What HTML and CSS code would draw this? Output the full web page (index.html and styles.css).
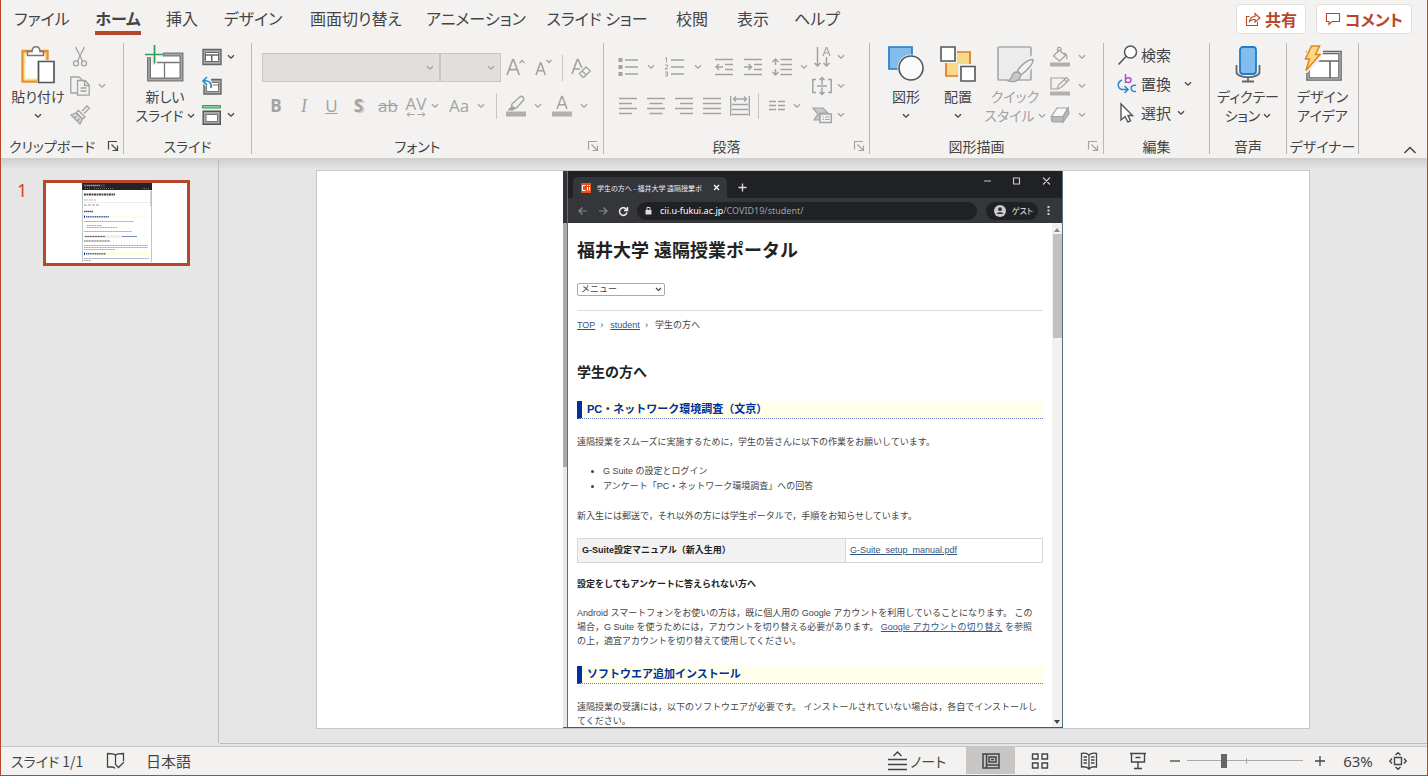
FILE: index.html
```html
<!DOCTYPE html>
<html lang="ja">
<head>
<meta charset="utf-8">
<title>プレゼンテーション</title>
<link rel="stylesheet" href="styles.css">
</head>
<body>
<svg class="defs" aria-hidden="true">
  <symbol id="chev" viewBox="0 0 8 6"><path d="M1 1.2 4 4.2 7 1.2" fill="none" stroke="currentColor" stroke-width="1.3"/></symbol>
  <symbol id="launch" viewBox="0 0 12 12"><path d="M1.5 9.500V1.500H10M4.500 4.500 10 10M10.500 5.500V10.500H5.500" fill="none" stroke="currentColor" stroke-width="1.2"/></symbol>
</svg>
<div class="app">
  <header class="topbar">
    <nav class="tabs" aria-label="リボン タブ">
      <button class="tab">ファイル</button><button class="tab tab-on"><span>ホーム</span></button><button class="tab">挿入</button><button class="tab">デザイン</button><button class="tab">画面切り替え</button><button class="tab">アニメーション</button><button class="tab">スライド ショー</button><button class="tab">校閲</button><button class="tab">表示</button><button class="tab">ヘルプ</button>
    </nav>
    <div class="actions">
      <button class="action"><svg width="16" height="16" viewBox="0 0 16 16" fill="none" stroke="currentColor" stroke-width="1.1"><path d="M4.500 5.500H1.500V14.500H12.500V11M4.500 10.500C5 7 7 5.500 10 5.500V2.500L15 7 10 11V8.500C7.500 8.300 6 8.800 4.500 10.500Z"/></svg>共有</button>
      <button class="action"><svg width="16" height="16" viewBox="0 0 16 16" fill="none" stroke="currentColor" stroke-width="1.1"><path d="M1.500 2.500H14.500V10.500H7L4 13.500V10.500H1.500Z"/></svg>コメント</button>
    </div>
  </header>

  <div class="ribbon">
    <section class="group g-clip">
      <div class="body">
        <button class="big w-paste"><svg width="36" height="40" viewBox="0 0 36 40"><path d="M3 6.500H27V36H3Z" fill="#fff" stroke="#e8912d" stroke-width="3.400"/><path d="M4.500 8.500H25.500V34.500H4.500Z" fill="#fff" stroke="#fbdf9d" stroke-width="1.800"/><path d="M7.500 10.500V6.500H12C12 0 20 0 20 6.500H23.500V10.500Z" fill="#fafafa" stroke="#777" stroke-width="1.500"/><path d="M17 15H36V40H17Z" fill="#f3f2f1"/><path d="M18.500 16.500H34V37.500H18.500Z" fill="#fff" stroke="#555" stroke-width="1.700"/></svg><span>貼り付け</span><svg class="chev"><use href="#chev"/></svg></button>
        <div class="stack off">
          <button class="mini" aria-label="切り取り"><svg width="20" height="20" viewBox="0 0 20 20" fill="none" stroke="currentColor" stroke-width="1.3"><path d="M5.500 0 12.500 14M14.500 0 7.500 14"/><circle cx="6" cy="16.300" r="2.500"/><circle cx="14" cy="16.300" r="2.500"/></svg></button>
          <button class="mini" aria-label="コピー"><svg width="20" height="20" viewBox="0 0 20 20" fill="none" stroke="currentColor" stroke-width="1.3"><path d="M7 17H.8V1H9L13 5"/><path d="M7.500 4.500H15L19.200 9V19.200H7.500ZM14.500 5V9.500H19M10.500 12H16.500M10.500 15H16.500"/></svg><svg class="chev"><use href="#chev"/></svg></button>
          <button class="mini" aria-label="書式のコピー"><svg width="20" height="20" viewBox="0 0 20 20" fill="none" stroke="currentColor" stroke-width="1.3"><path d="M12 6 17 1 19.300 3.300 14 8.500M8.500 5.500 15 12 12.500 14 6.300 7.500Z"/><path d="M6 8 1 10 10 19 12.500 14ZM4 13 6.500 11.500M7 16 9.500 14" fill="#d6d6d6"/></svg></button>
        </div>
      </div>
      <div class="foot"><span>クリップボード</span><button class="launch" aria-label="クリップボードの設定"><svg width="12" height="12"><use href="#launch"/></svg></button></div>
    </section>

    <section class="group g-slide">
      <div class="body">
        <button class="big w-new"><svg width="38" height="38" viewBox="0 0 38 38"><path d="M3 9.500H35.500V34.500H3Z" fill="#fff" stroke="#777" stroke-width="4"/><path d="M3 9.500H35.500V34.500H3Z" fill="none" stroke="#aaa" stroke-width="1.400"/><path d="M5 17.500H33.500M18.500 17.500V33" stroke="#777" stroke-width="1.300"/><path d="M0 7H17V12H11V20H5V12H0Z" fill="#f3f2f1"/><path d="M8.500 0V18.500M-1 9.500H18" stroke="#2f9e58" stroke-width="1.700"/></svg><span>新しい<br>スライド <svg class="chev"><use href="#chev"/></svg></span></button>
        <div class="stack">
          <button class="mini" aria-label="レイアウト"><svg width="20" height="20" viewBox="0 0 20 20" fill="#fff" stroke="#666"><path d="M1 2.500H19V17.500H1Z" fill="#aaa" stroke-width="1.400"/><path d="M3.500 5.500H16.500V8H3.500ZM3.500 8H9.500V14.500H3.500ZM10 8H16.500V14.500H10Z"/></svg><svg class="chev"><use href="#chev"/></svg></button>
          <button class="mini" aria-label="リセット"><svg width="20" height="20" viewBox="0 0 20 20" fill="none"><path d="M2 3.500H19V18H2Z" fill="#aaa" stroke="#666" stroke-width="1.400"/><path d="M4.500 6.500H16.500V15.500H4.500ZM10 9H16.500" fill="#fff" stroke="#777"/><path d="M0 0H9V8H0Z" fill="#f3f2f1"/><path d="M5 1 1 5 5 9M1 5C7 4 10 7 9 12" stroke="#f3f2f1" stroke-width="3.500"/><path d="M5 1 1 5 5 9M1 5C7 4 10 7 9 12" stroke="#1e8bcd" stroke-width="1.600"/></svg></button>
          <button class="mini" aria-label="セクション"><svg width="20" height="20" viewBox="0 0 20 20"><path d="M.5.5H18.500V3H.5Z" fill="#8ed0a0" stroke="#2f9e58"/><path d="M1.200 6.200H18.300V19.300H1.200Z" fill="#aaa" stroke="#555" stroke-width="1.400"/><path d="M4 9.500H15.500V16.500H4Z" fill="#fff" stroke="#777"/></svg><svg class="chev"><use href="#chev"/></svg></button>
        </div>
      </div>
      <div class="foot"><span>スライド</span></div>
    </section>

    <section class="group g-font off">
      <div class="rows">
        <div class="row font1">
          <label class="combo"><select disabled aria-label="フォント"></select><svg class="chev"><use href="#chev"/></svg></label>
          <label class="combo"><select disabled aria-label="フォント サイズ"></select><svg class="chev"><use href="#chev"/></svg></label>
          <button class="tool" aria-label="拡大"><svg width="20" height="20" viewBox="0 0 20 20" fill="none" stroke="currentColor"><path d="M1 17 6.800 1.500H7.500L13.300 17M3 11.700H11.300" stroke-width="1.700"/><path d="M13.500 5 16 2.500 18.500 5" stroke-width="1.300"/></svg></button>
          <button class="tool" aria-label="縮小"><svg width="20" height="20" viewBox="0 0 20 20" fill="none" stroke="currentColor"><path d="M2 17 6.300 5H7L11.300 17M3.700 12.700H9.600" stroke-width="1.600"/><path d="M12.500 2 15 4.500 17.500 2" stroke-width="1.300"/></svg></button>
          <i class="sep"></i>
          <button class="tool" aria-label="書式のクリア"><svg width="20" height="20" viewBox="0 0 20 20" fill="none" stroke="currentColor"><path d="M1 16 6.300 1.500H7L11 10M3 11H9" stroke-width="1.600"/><path d="M8.500 15.500 15 9 19.300 13 13 19H11.500ZM11 13 15.500 17" stroke-width="1.300"/></svg></button>
        </div>
        <div class="row font2">
          <button class="tool glyph"><b>B</b></button>
          <button class="tool glyph"><i class="ital">I</i></button>
          <button class="tool glyph"><u>U</u></button>
          <button class="tool glyph shade"><b>S</b></button>
          <button class="tool glyph"><s>ab</s></button>
          <button class="tool glyph spacing"><span>AV</span><svg width="20" height="5" viewBox="0 0 20 5" fill="none" stroke="currentColor"><path d="M3.500.5 1 2.500 3.500 4.500M1 2.500H8.500M16.500.5 19 2.500 16.500 4.500M19 2.500H11.500"/></svg></button>
          <svg class="chev"><use href="#chev"/></svg>
          <button class="tool glyph">Aa</button>
          <svg class="chev"><use href="#chev"/></svg>
          <i class="sep"></i>
          <button class="tool" aria-label="蛍光ペン"><svg width="20" height="22" viewBox="0 0 20 22" fill="none" stroke="currentColor"><path d="M6 9 14 1.700C16 .5 19 3 17.500 5L10.500 13H7.500L5.500 11Z" stroke-width="1.400"/><path d="M6 11.500 2 15H7.500L9 13Z" fill="currentColor"/><path d="M0 19H20" stroke="#b2afad" stroke-width="5"/></svg></button>
          <svg class="chev"><use href="#chev"/></svg>
          <button class="tool" aria-label="フォントの色"><svg width="20" height="22" viewBox="0 0 20 22" fill="none" stroke="currentColor"><path d="M5 14 9.700 1.500H10.300L15 14M6.700 9.700H13.300" stroke-width="1.500"/><path d="M0 19H20" stroke="#b2afad" stroke-width="5"/></svg></button>
          <svg class="chev"><use href="#chev"/></svg>
        </div>
      </div>
      <div class="foot"><span>フォント</span><button class="launch" aria-label="フォントの設定"><svg width="12" height="12"><use href="#launch"/></svg></button></div>
    </section>

    <section class="group g-para off">
      <div class="body">
        <div class="rows">
          <div class="row para1">
            <button class="tool" aria-label="箇条書き"><svg width="20" height="20" viewBox="0 0 20 20" stroke="currentColor" stroke-width="1.600"><path d="M7 3H20M7 10H20M7 17H20"/><path d="M.5 3H4.500M.5 10H4.500M.5 17H4.500" stroke-width="4"/></svg></button>
            <svg class="chev"><use href="#chev"/></svg>
            <button class="tool" aria-label="段落番号"><svg width="20" height="20" viewBox="0 0 20 20" fill="none" stroke="currentColor" stroke-width="1.600"><path d="M7 3H20M7 10H20M7 17H20"/><path d="M1 1.500 2.500.500V5.500M1 8H3.500V10L1 12H4M1 15H3.500V19H1M1.500 17H3.500" stroke-width="1"/></svg></button>
            <svg class="chev"><use href="#chev"/></svg>
            <button class="tool" aria-label="インデントを減らす"><svg width="18" height="20" viewBox="0 0 18 20" fill="none" stroke="currentColor" stroke-width="1.500"><path d="M0 2.500H18M10 7.500H18M10 12.500H18M0 17.500H18M1 10H8M4 7 1 10 4 13"/></svg></button>
            <button class="tool" aria-label="インデントを増やす"><svg width="18" height="20" viewBox="0 0 18 20" fill="none" stroke="currentColor" stroke-width="1.500"><path d="M0 2.500H18M10 7.500H18M10 12.500H18M0 17.500H18M0 10H7M4.500 7 7.500 10 4.500 13"/></svg></button>
            <button class="tool" aria-label="行間"><svg width="20" height="20" viewBox="0 0 20 20" fill="none" stroke="currentColor" stroke-width="1.500"><path d="M8.500 2.500H20M8.500 7.500H20M8.500 12.500H20M8.500 17.500H20M3.500 2V8M.5 5 3.500 2 6.500 5M3.500 12V18M.5 15 3.500 18 6.500 15"/></svg></button>
            <svg class="chev"><use href="#chev"/></svg>
          </div>
          <div class="row para2">
            <button class="tool" aria-label="左揃え"><svg width="18" height="20" viewBox="0 0 18 20" stroke="currentColor" stroke-width="1.500"><path d="M0 2.500H18M0 7.500H13M0 12.500H18M0 17.500H13"/></svg></button>
            <button class="tool" aria-label="中央揃え"><svg width="18" height="20" viewBox="0 0 18 20" stroke="currentColor" stroke-width="1.500"><path d="M0 2.500H18M2.500 7.500H15.500M0 12.500H18M2.500 17.500H15.500"/></svg></button>
            <button class="tool" aria-label="右揃え"><svg width="18" height="20" viewBox="0 0 18 20" stroke="currentColor" stroke-width="1.500"><path d="M0 2.500H18M5 7.500H18M0 12.500H18M5 17.500H18"/></svg></button>
            <button class="tool" aria-label="両端揃え"><svg width="18" height="20" viewBox="0 0 18 20" stroke="currentColor" stroke-width="1.500"><path d="M0 2.500H18M0 7.500H18M0 12.500H18M0 17.500H18"/></svg></button>
            <button class="tool" aria-label="均等割り付け"><svg width="20" height="22" viewBox="0 0 20 22" fill="none" stroke="currentColor" stroke-width="1.300"><path d="M.7 1V21M19.300 1V21M2 9.500H18M2 14.500H18M2 19.500H18M3.500 4H16.500M6 1.500 3.500 4 6 6.500M14 1.500 16.500 4 14 6.500"/></svg></button>
            <i class="sep"></i>
            <button class="tool" aria-label="段組み"><svg width="16" height="12" viewBox="0 0 16 12" stroke="currentColor" stroke-width="1.400"><path d="M0 1.500H7M9 1.500H16M0 5.500H7M9 5.500H16M0 9.500H7M9 9.500H16"/></svg></button>
            <svg class="chev"><use href="#chev"/></svg>
          </div>
        </div>
        <div class="stack">
          <button class="mini" aria-label="文字列の方向"><svg width="20" height="22" viewBox="0 0 20 22" fill="none" stroke="currentColor" stroke-width="1.500"><path d="M5.500 1V20M2.500 17 5.500 20 8.500 17M14.500 11V20M11.500 17 14.500 20 17.500 17"/><path d="M11 10 14.200 1.500H14.800L18 10M12 7H17" stroke-width="1.100"/></svg><svg class="chev"><use href="#chev"/></svg></button>
          <button class="mini" aria-label="文字の配置"><svg width="20" height="20" viewBox="0 0 20 20" fill="none" stroke="currentColor" stroke-width="1.500"><path d="M4 3.500H.8V16.500H4M16 3.500H19.200V16.500H16M5 10H15M10 1.500V8.500M7.500 4 10 1.500 12.500 4M10 11.500V18.500M7.500 16 10 18.500 12.500 16" /></svg><svg class="chev"><use href="#chev"/></svg></button>
          <button class="mini" aria-label="SmartArt に変換"><svg width="20" height="18" viewBox="0 0 20 18" stroke="currentColor" stroke-width="1.200"><path d="M1 2H11L16 7H8V14H2L6 8Z" fill="#c9c9c9"/><path d="M8 8H19.300V16.500H8Z" fill="#f3f2f1" stroke-width="1.500"/><path d="M10.500 11H12M13 11H17.500M10.500 13.500H12M13 13.500H17.500"/></svg><svg class="chev"><use href="#chev"/></svg></button>
        </div>
      </div>
      <div class="foot"><span>段落</span><button class="launch" aria-label="段落の設定"><svg width="12" height="12"><use href="#launch"/></svg></button></div>
    </section>

    <section class="group g-draw">
      <div class="body">
        <button class="big w-shape"><svg width="36" height="38" viewBox="0 0 36 38"><path d="M1 2H24V24H1Z" fill="#83bdee" stroke="#1f7dc9" stroke-width="1.700"/><circle cx="23" cy="23" r="13.500" fill="#f3f2f1"/><circle cx="23" cy="23" r="12" fill="#fafafa" stroke="#555" stroke-width="1.600"/></svg><span>図形</span><svg class="chev"><use href="#chev"/></svg></button>
        <button class="big w-shape"><svg width="36" height="38" viewBox="0 0 36 38"><path d="M6 7H30V31H6Z" fill="#f8d98a" stroke="#e07a1b" stroke-width="1.700"/><path d="M0 0H17V18H0ZM18 19H36V38H18Z" fill="#f3f2f1"/><path d="M1 2H15V16H1ZM21 21.500H35V36H21Z" fill="#fff" stroke="#555" stroke-width="1.600"/></svg><span>配置</span><svg class="chev"><use href="#chev"/></svg></button>
        <button class="big w-quick off"><svg width="38" height="38" viewBox="0 0 38 38" stroke="currentColor"><rect x="2" y="2" width="33" height="33" rx="1" fill="#ececec" stroke="#ababab" stroke-width="1.700"/><path d="M11 36 22 24 36 10 38 20 30 32Z" fill="#f3f2f1" stroke="none"/><path d="M21.500 26C24 20 33 14 37 14.500C38 18 31 26 25 30Z" fill="#f1f1f1" stroke-width="1.400"/><path d="M12 36C17 35 14 28 20 27C25 27 26 31 23 34C20 37 15 37 12 36Z" fill="#c8c8c8" stroke-width="1.300"/></svg><span>クイック<br>スタイル <svg class="chev"><use href="#chev"/></svg></span></button>
        <div class="stack off">
          <button class="mini" aria-label="図形の塗りつぶし"><svg width="20" height="20" viewBox="0 0 20 20" fill="none" stroke="currentColor" stroke-width="1.200"><path d="M9 3 15.500 8.500 9.500 14 3.500 9ZM11 5V1.500C10 0 7.500 0 7.500 2V6M14 6C17 7 17.500 9 16.500 12"/><path d="M0 17.500H20" stroke="#b2afad" stroke-width="4"/></svg><svg class="chev"><use href="#chev"/></svg></button>
          <button class="mini" aria-label="図形の枠線"><svg width="20" height="20" viewBox="0 0 20 20" fill="none" stroke="currentColor" stroke-width="1.200"><path d="M15 2H1V13H6M7 13 8.500 9 16.500 1.500 19 4 11 11.500ZM14.500 3.500 17 6"/><path d="M0 17.500H20" stroke="#b2afad" stroke-width="4"/></svg><svg class="chev"><use href="#chev"/></svg></button>
          <button class="mini" aria-label="図形の効果"><svg width="20" height="20" viewBox="0 0 20 20" stroke="currentColor" stroke-width="1.200"><path d="M7 3H18L13 11.500H1.500Z" fill="#f8f8f8"/><path d="M1.500 11.500H13V17H3Q1 17 1.500 11.500ZM18 3 19 8.500 13 17V11.500Z" fill="#b9b9b9"/></svg><svg class="chev"><use href="#chev"/></svg></button>
        </div>
      </div>
      <div class="foot"><span>図形描画</span><button class="launch off" aria-label="図形描画の設定"><svg width="12" height="12"><use href="#launch"/></svg></button></div>
    </section>

    <section class="group g-edit">
      <div class="body">
        <div class="stack">
          <button class="mini text"><svg width="20" height="20" viewBox="0 0 20 20" fill="#fff" stroke="#555" stroke-width="1.500"><circle cx="12.500" cy="7" r="6"/><path d="M8 11.500.5 19.500"/></svg>検索</button>
          <button class="mini text far"><svg width="20" height="20" viewBox="0 0 20 20" fill="none" stroke-width="1.500"><path d="M7.500 0V9M7.500 5.500C8.500 3 13 3 13 6S8.500 9.500 7.500 7" stroke="#b14fc0"/><path d="M4 6C-1 8-1 14 4 15.500H9M6.500 12 10 15.500 6.500 19M18 11.500C12 9.500 11 18.500 18 17.500" stroke="#2389cf"/></svg>置換<svg class="chev"><use href="#chev"/></svg></button>
          <button class="mini text"><svg width="20" height="20" viewBox="0 0 20 20" fill="#fff" stroke="#555" stroke-width="1.400"><path d="M3 1V17L7 13.500 10 19 12.500 17.700 10 12.500H14.500Z"/></svg>選択<svg class="chev"><use href="#chev"/></svg></button>
        </div>
      </div>
      <div class="foot"><span>編集</span></div>
    </section>

    <section class="group g-voice">
      <div class="body">
        <button class="big w-full"><svg width="26" height="38" viewBox="0 0 26 38"><path d="M1.500 20V27C1.500 34 24.500 34 24.500 27V20M13 32V36M7 36.500H19" fill="none" stroke="#666" stroke-width="1.800"/><rect x="5" y="2" width="16" height="27" rx="3" fill="#83bdee" stroke="#1f7dc9" stroke-width="1.800"/></svg><span>ディクテー<br>ション <svg class="chev"><use href="#chev"/></svg></span></button>
      </div>
      <div class="foot"><span>音声</span></div>
    </section>

    <section class="group g-design">
      <div class="body">
        <button class="big w-full"><svg width="38" height="38" viewBox="0 0 38 38"><path d="M4 7.500H36V34H4Z" fill="#fff" stroke="#666" stroke-width="3.600"/><path d="M4 7.500H36V34H4Z" fill="none" stroke="#ccc" stroke-width="1"/><path d="M5 16H35M26 16V33" stroke="#666" stroke-width="1.600"/><path d="M5 0H19V8L18 13 3 28 0 28V14Z" fill="#f3f2f1"/><path d="M7.500 1H15.500L11.500 9.500H16L2 25.500 5.500 14H1.500Z" fill="#fbd98a" stroke="#e8861c" stroke-width="1.600"/></svg><span>デザイン<br>アイデア</span></button>
      </div>
      <div class="foot"><span>デザイナー</span></div>
    </section>
    <button class="collapse" aria-label="リボンを折りたたむ"><svg width="14" height="8" viewBox="0 0 14 8" fill="none" stroke="currentColor" stroke-width="1.500"><path d="M1.500 7 7 1.500 12.500 7"/></svg></button>
  </div>

  <main class="work">
    <aside class="thumbs">
      <span class="num">1</span>
      <button class="thumb" aria-label="スライド 1">
        <svg class="thumb-pic" viewBox="0 0 70 79" preserveAspectRatio="none">
          <path d="M0 0H70V79H0Z" fill="#fff"/><path d="M.5 0V79M69.500 0V79" stroke="#8aa0ad" stroke-width=".6"/><path d="M0 0H70V7H0Z" fill="#222428"/><path d="M1.500 1H23V4H1.500Z" fill="#393b3f"/><path d="M2.300 2.500H4" stroke="#e8501e" stroke-width="1.400"/><path d="M5 2.500H18" stroke="#aaa" stroke-dasharray="1.400 .5"/><path d="M3 5.500H9M12 5.500H32M60 5.500H67" stroke="#888" stroke-dasharray="1 1" stroke-width=".8"/>
          <path d="M2 11.500H33" stroke="#444" stroke-width="2.200" stroke-dasharray="2 .5"/>
          <path d="M2 17H14" stroke="#bbb" stroke-width="1" stroke-dasharray="4 1"/><path d="M1 19.500H68" stroke="#ddd" stroke-width=".5"/>
          <path d="M2 22H18" stroke="#999" stroke-dasharray="3 1"/><path d="M2 28.500H11" stroke="#555" stroke-width="1.500" stroke-dasharray="1.500 .4"/>
          <path d="M2 32.500H67V35H2ZM2 69.500H67V72H2Z" fill="#ffffdc"/><path d="M2 32.500H3V35H2ZM2 69.500H3V72H2Z" fill="#0030a0"/>
          <path d="M4 33.700H27M4 70.700H24" stroke="#4865ae" stroke-width="1.400" stroke-dasharray="1.300 .5"/>
          <path d="M2 38.500H52M5 42.500H20M5 44.500H35M2 48.500H50M2 62.500H66M2 64.500H66M2 66.500H33M2 75.500H67M2 77.500H9" stroke="#999" stroke-width=".9" stroke-dasharray="1.200 .4"/>
          <path d="M2 52H40V55H2Z" fill="#eee"/><path d="M3 53.500H23M2 58H28" stroke="#555" stroke-width="1.100" stroke-dasharray="1.200 .4"/><path d="M40 53.500H55" stroke="#7b8ead"/>
          <path d="M69 8V23" stroke="#bbb" stroke-width="1.300"/>
        </svg>
      </button>
    </aside>
    <div class="stage">
      <article class="slide">
        <div class="shot">
          <div class="behind"></div>
          <div class="browser">
            <div class="titlebar">
              <div class="btab"><svg width="10" height="10" viewBox="0 0 10 10"><path d="M0 0H10V10H0Z" fill="#e8501e"/><path d="M4.500 2.500H1.500V7.500H4.500M6.500 4V7.500M8.500 4V7.500M6.500 2V3M8.500 2V3" fill="none" stroke="#fff"/></svg><span class="btitle">学生の方へ - 福井大学 遠隔授業ポ</span><svg width="7" height="7" viewBox="0 0 7 7" stroke="#fff" stroke-width="1.300"><path d="M1 1 6 6M6 1 1 6"/></svg></div>
              <svg class="plus" width="9" height="9" viewBox="0 0 9 9" stroke="#ddd" stroke-width="1.300"><path d="M4.500.5V8.500M.5 4.500H8.500"/></svg>
              <svg class="wins" width="68" height="10" viewBox="0 0 68 10" fill="none" stroke="#ccc" stroke-width="1.100"><path d="M1 5H8M30.500 2H36.500V8H30.500ZM60 1.500 67 8.500M67 1.500 60 8.500"/></svg>
            </div>
            <div class="addr">
              <svg class="nav" width="50" height="10" viewBox="0 0 50 10" fill="none" stroke="#85888c" stroke-width="1.200"><path d="M9 5H1M4.500 1.500 1 5 4.500 8.500M21 5H29M25.500 1.500 29 5 25.500 8.500"/><path d="M48.500 3.500A3.800 3.800 0 1 0 49 6.500M49.500 1V4.500H46" stroke="#eee" stroke-width="1.500"/></svg>
              <div class="url"><svg width="7" height="9" viewBox="0 0 7 9"><path d="M.5 4H6.500V8.500H.5Z" fill="#ddd"/><path d="M2 4V1.500H5V4" fill="none" stroke="#ddd"/></svg><span><b>cii.u-fukui.ac.jp</b>/COVID19/student/</span></div>
              <div class="guest"><svg width="12" height="12" viewBox="0 0 12 12"><circle cx="6" cy="6" r="6" fill="#ccc"/><circle cx="6" cy="4.200" r="1.900" fill="#333"/><path d="M2.500 9C3.500 6.500 8.500 6.500 9.500 9Z" fill="#333"/></svg>ゲスト</div>
              <svg width="3" height="9" viewBox="0 0 3 9" fill="#ccc"><path d="M.5 0H2.500V2H.5ZM.5 3.500H2.500V5.500H.5ZM.5 7H2.500V9H.5Z"/></svg>
            </div>
            <div class="view">
              <div class="page">
                <h1>福井大学 遠隔授業ポータル</h1>
                <label class="menu"><select aria-label="メニュー"><option>メニュー</option></select><svg width="7" height="5"><use href="#chev"/></svg></label>
                <nav class="crumbs"><a href="#">TOP</a><span>›</span><a href="#">student</a><span>›</span><em>学生の方へ</em></nav>
                <h2>学生の方へ</h2>
                <h3>PC・ネットワーク環境調査（文京）</h3>
                <p>遠隔授業をスムーズに実施するために，学生の皆さんに以下の作業をお願いしています。</p>
                <ul><li>G Suite の設定とログイン</li><li>アンケート「PC・ネットワーク環境調査」への回答</li></ul>
                <p>新入生には郵送で，それ以外の方には学生ポータルで，手順をお知らせしています。</p>
                <table><tr><th>G-Suite設定マニュアル（新入生用）</th><td><a href="#">G-Suite_setup_manual.pdf</a></td></tr></table>
                <h4>設定をしてもアンケートに答えられない方へ</h4>
                <p>Android スマートフォンをお使いの方は，既に個人用の Google アカウントを利用していることになります。 この<br>場合，G Suite を使うためには，アカウントを切り替える必要があります。 <a href="#">Google アカウントの切り替え</a> を参照<br>の上，適宜アカウントを切り替えて使用してください。</p>
                <h3>ソフトウエア追加インストール</h3>
                <p class="last">遠隔授業の受講には，以下のソフトウエアが必要です。 インストールされていない場合は，各自でインストールし<br>てください。</p>
              </div>
              <div class="bar"><svg width="6" height="4"><path d="M0 4 3 0 6 4Z" fill="#888"/></svg><i></i><svg width="6" height="4"><path d="M0 0 3 4 6 0Z" fill="#444"/></svg></div>
            </div>
          </div>
        </div>
      </article>
    </div>
  </main>

  <footer class="status">
    <span class="count">スライド 1/1</span>
    <svg class="book" width="20" height="18" viewBox="0 0 20 18" fill="none" stroke="currentColor" stroke-width="1.300"><path d="M9.500 3C7.500 1.500 4 1.500 1.500 1.500V15H6C7.500 15 8.500 15.500 9 16.500M9.500 3C11.500 1.500 15 1.500 17.500 1.500V9M9.500 3V13M10 13 12.500 15.500 18 10"/></svg>
    <span class="lang">日本語</span>
    <button class="note"><svg width="20" height="20" viewBox="0 0 20 20" fill="none" stroke="currentColor" stroke-width="1.500"><path d="M0 8.500H19M0 13.500H19M0 18.500H19M5.500 5 9.500 1 13.500 5"/></svg>ノート</button>
    <button class="vbtn vbtn-on" aria-label="標準"><svg width="18" height="16" viewBox="0 0 18 16" fill="none" stroke="currentColor" stroke-width="1.500"><path d="M1 1H17V15H1ZM4.500 1V15M7 4H14V9H7ZM9 6.500H12M4.500 12H17"/></svg></button>
    <button class="vbtn" aria-label="スライド一覧"><svg width="18" height="16" viewBox="0 0 18 16" fill="none" stroke="currentColor" stroke-width="1.400"><path d="M1.500 1H7V6H1.500ZM11 1H16.500V6H11ZM1.500 10H7V15H1.500ZM11 10H16.500V15H11Z"/></svg></button>
    <button class="vbtn" aria-label="閲覧表示"><svg width="18" height="18" viewBox="0 0 18 18" fill="none" stroke="currentColor" stroke-width="1.300"><path d="M9 3C7 1 4 1 1.500 1.500V15C4 14.500 7 14.500 9 17C11 14.500 14 14.500 16.500 15V1.500C14 1 11 1 9 3ZM9 3V17M3.500 5H7M3.500 8H7M3.500 11H7M11 5H14.500M11 8H14.500M11 11H14.500"/></svg></button>
    <button class="vbtn" aria-label="スライド ショー"><svg width="18" height="18" viewBox="0 0 18 18" fill="none" stroke="currentColor" stroke-width="1.400"><path d="M1 1.500H17M2.500 1.500V10H15.500V1.500M6.500 5.500H11.500M9 10V16M5 16.500H13"/></svg></button>
    <button class="zbtn" aria-label="縮小"><svg width="10" height="10" viewBox="0 0 10 10" stroke="currentColor" stroke-width="1.300"><path d="M0 5H10"/></svg></button>
    <label class="zoom"><input type="range" min="0" max="100" value="31" aria-label="ズーム"><i></i></label>
    <button class="zbtn" aria-label="拡大"><svg width="10" height="10" viewBox="0 0 10 10" stroke="currentColor" stroke-width="1.300"><path d="M0 5H10M5 0V10"/></svg></button>
    <button class="pct">63%</button>
    <button class="zbtn" aria-label="ウィンドウに合わせる"><svg width="18" height="18" viewBox="0 0 18 18" fill="none" stroke="currentColor" stroke-width="1.400"><path d="M5.500 5.500H12.500V12.500H5.500ZM6.500 3 9 .8 11.500 3M6.500 15 9 17.200 11.500 15M3 6.500 .8 9 3 11.500M15 6.500 17.200 9 15 11.500"/></svg></button>
  </footer>
</div>
</body>
</html>
```
FILE: styles.css
```css
* { box-sizing: border-box; }
body { margin: 0; font-family: "Noto Sans CJK JP", sans-serif; font-size: 14px; color: #444; font-feature-settings: "palt"; }
button { font: inherit; font-feature-settings: inherit; color: inherit; background: none; border: 0; padding: 0; margin: 0; }
select { font: inherit; color: inherit; appearance: none; }
svg { display: block; flex: none; overflow: visible; }
.defs { position: absolute; width: 0; height: 0; }
.app { min-height: 100vh; display: flex; flex-direction: column; background: #f3f2f1; border: 1px solid #b7472a; border-top: 0; }
.chev { width: 8px; height: 6px; }
.off { color: #a3a2a1; }

/* tabs */
.topbar { display: flex; justify-content: space-between; height: 38px; flex: none; }
.tabs { display: grid; grid-template-columns: 82px 70px 58px 84px 122px 118px 124px 66px 56px 72px; }
.tab { font-size: 16px; line-height: 36px; white-space: nowrap; display: flex; justify-content: center; }
.tab-on { font-weight: 700; }
.tab-on span { border-bottom: 4px solid #b7472a; height: 35px; }
.actions { display: flex; gap: 10px; padding: 4px 15px 4px 0; }
.action { display: flex; align-items: center; gap: 4px; padding: 0 8px; background: #fff; border: 1px solid #e1dfdd; border-radius: 3px; color: #b7472a; font-weight: 700; font-size: 16px; }

/* ribbon */
.ribbon { display: flex; height: 122px; padding-top: 5px; border-bottom: 2px solid #d0cfce; flex: none; }
.group { height: 111px; display: flex; flex-direction: column; justify-content: space-between; border-right: 1px solid #b9b8b7; }
.g-clip { width: 123px; }
.g-slide { width: 128px; }
.g-font { width: 352px; }
.g-para { width: 266px; }
.g-draw { width: 234px; }
.g-edit { width: 106px; }
.g-voice { width: 77px; }
.g-design { width: 72px; }
.body { display: flex; }
.foot { display: flex; height: 16px; line-height: 16px; color: #444; }
.foot span { flex: 1; text-align: center; white-space: nowrap; }
.launch { width: 20px; display: flex; align-items: center; justify-content: center; }
.off .launch { color: #a3a2a1; }
.big { display: flex; flex-direction: column; align-items: center; line-height: 19px; white-space: nowrap; }
.big > svg:first-child { margin: 2px 0 4px; }
.big > .chev { margin-top: 7px; }
.big span .chev { display: inline-block; vertical-align: 2px; }
.w-paste { width: 56px; margin-left: 9px; }
.w-paste > svg:first-child { margin: 2px 0; }
.w-new { width: 62px; margin: 0 2px 0 10px; }
.w-shape { width: 52px; }
.g-draw .body { padding-left: 10px; }
.w-quick { width: 62px; }
.w-full { width: 100%; }
.stack { display: flex; flex-direction: column; margin-top: -1px; }
.mini { height: 29px; display: flex; align-items: center; gap: 8px; padding-left: 4px; }
.g-para .mini, .g-slide .mini { gap: 5px; }
.g-edit .body { padding-left: 10px; }
.g-edit .stack { margin-top: -3px; }
.text { font-size: 15px; gap: 3px; white-space: nowrap; }
.text .chev { margin-left: 3px; }
.far .chev { margin-left: 10px; }
.collapse { margin: 103px 10px auto auto; }

.row { display: grid; align-items: center; justify-items: center; }
.rows { padding: 8px 0 0 10px; }
.font1 { grid-template-columns: 178px 61px 29px 28px 8px 30px; height: 33px; }
.font2 { grid-template-columns: 28px 28px 27px 27px 32px 24px 14px 34px 10px 20px 20px 24px 24px 20px; height: 44px; }
.combo { position: relative; width: 100%; }
.combo select { display: block; width: 100%; height: 29px; background: #e1dfdd; border: 1px solid #c8c6c4; border-radius: 0; opacity: 1; }
.combo .chev { position: absolute; right: 6px; top: 12px; }
.tool { display: flex; align-items: center; justify-content: center; }
.glyph { font-family: "Open Sans", sans-serif; font-size: 17px; line-height: 20px; }
.ital { font-family: "Liberation Serif", serif; font-size: 18px; }
.shade { text-shadow: 2px 1px 1px #ccc; }
.spacing { flex-direction: column; line-height: 16px; }
.sep { width: 1px; height: 26px; background: #c8c6c4; }
.para1 { grid-template-columns: 28px 17px 30px 17px 36px 22px 36px 8px; height: 31px; }
.para2 { grid-template-columns: 28px 28px 28px 28px 27px 10px 27px 14px; height: 48px; }

/* workspace */
.work { flex: 1; display: grid; grid-template-columns: 218px 1fr; background: linear-gradient(#d2d2d2, #e6e6e6 10px); }
.thumbs { display: flex; align-items: flex-start; gap: 16px; padding: 20px 0 0 16px; border-right: 1px solid #bdbdbd; margin-bottom: 3px; }
.num { font-family: "Noto Sans", sans-serif; font-size: 18px; line-height: 20px; color: #d24726; width: 10px; }
.thumb { width: 147px; height: 86px; border: 3px solid #b7472a; background: #fff; display: flex; justify-content: center; }
.thumb-pic { width: 70px; height: 79px; }
.stage { display: flex; margin-left: 1px; padding: 10px 117px 14px 96px; border-bottom: 1px solid #bdbdbd; margin-bottom: 2px; }
.slide { flex: 1; display: flex; justify-content: center; background: #fff; border: 1px solid #c6c6c6; }
.shot { width: 500px; display: flex; border-bottom: 1px solid #555; }
.behind { width: 4px; background: linear-gradient(#333 52px, #aaa 52px 296px, #e8e8e8 296px); }
.browser { flex: 1; border: 1px solid #4f7285; border-width: 0 1px; display: flex; flex-direction: column; color: #eee; font-size: 8px; background: #35363a; }
.titlebar { height: 27px; background: #202124; display: flex; align-items: center; }
.btab { align-self: flex-end; height: 21px; width: 154px; margin-left: 5px; padding: 0 7px 0 8px; display: flex; align-items: center; gap: 6px; background: #35363a; border-radius: 5px 5px 0 0; }
.btitle { flex: 1; font-size: 7px; white-space: nowrap; }
.plus { margin: 6px 0 0 11px; }
.wins { margin: 0 11px 8px auto; }
.addr { height: 25px; display: flex; align-items: center; gap: 9px; padding: 0 12px 0 10px; }
.url { flex: 1; height: 18px; border-radius: 9px; background: #202124; display: flex; align-items: center; gap: 8px; padding-left: 8px; font-family: "Noto Sans", sans-serif; font-size: 9px; color: #9aa0a6; }
.url b { font-weight: 400; color: #fff; }
.guest { height: 18px; border-radius: 9px; background: #202124; display: flex; align-items: center; gap: 6px; padding: 0 5px 0 8px; }
.view { flex: 1; display: flex; background: #fff; }
.page { flex: 1; padding: 13px 9px 0; color: #444; font-family: "Liberation Sans", "Noto Sans CJK JP", sans-serif; font-size: 9px; line-height: 15px; font-feature-settings: normal; white-space: nowrap; }
.page a { color: #36547f; }
.page h1 { margin: 0; font-size: 18px; line-height: 30px; color: #222; }
.menu { position: relative; display: block; width: 88px; margin: 17px 0 14px; }
.menu select { display: block; width: 100%; height: 13px; padding: 0 3px; line-height: 11px; border: 1px solid #aaa; border-radius: 2px; background: #fff; }
.menu svg { position: absolute; right: 3px; top: 4px; }
.crumbs { border-top: 1px solid #ddd; padding-top: 7px; display: flex; gap: 5px; }
.crumbs a + span { margin-right: 2px; }
.crumbs em { font-style: normal; }
.page h2 { margin: 29px 0 19px; font-size: 14px; line-height: 20px; color: #222; }
.page h3 { margin: 0 0 16px; font-size: 11px; line-height: 17px; color: #0030a0; background: #ffffeb; border-left: 5px solid #0030a0; border-bottom: 1px dotted #5f7fc0; padding-left: 5px; }
.page p { margin: 0 0 15px; line-height: 14px; }
.page p + h3 { margin-top: 18px; }
.page ul { margin: 0 0 15px; padding-left: 26px; }
.page table { width: 100%; border-collapse: collapse; margin: 0 0 14px; }
.page th, .page td { border: 1px solid #d5d8da; padding: 4px; text-align: left; height: 23px; }
.page th { background: #f2f2f2; color: #222; width: 268px; }
.page h4 { margin: 0 0 14px; font-size: 9px; color: #222; }
.page .last { margin: 0 0 -4px; }
.bar { width: 10px; background: #f1f1f1; display: flex; flex-direction: column; align-items: center; padding: 5px 0 3px; }
.bar i { width: 9px; height: 104px; margin: 2px 0 auto; background: #c1c1c1; }

/* status bar */
.status { height: 29px; flex: none; display: flex; align-items: center; border-top: 1px solid #c6c6c6; padding: 0 20px 1px 10px; line-height: 26px; }
.count { width: 95px; }
.book { margin-right: 20px; }
.lang { font-size: 15px; }
.note { margin: 0 20px 0 auto; display: flex; align-items: center; gap: 2px; }
.vbtn { width: 49px; height: 27px; display: flex; align-items: center; justify-content: center; }
.vbtn-on { background: #c8c6c4; }
.zbtn { display: flex; }
.vbtn + .zbtn { margin-left: 8px; }
.zoom { position: relative; width: 116px; margin: 0 12px 0 7px; display: flex; }
.zoom input { appearance: none; width: 100%; height: 14px; margin: 0; background: linear-gradient(#aaa, #aaa) center / 100% 1px no-repeat; }
.zoom input::-webkit-slider-thumb { appearance: none; width: 6px; height: 14px; background: #666; }
.zoom i { position: absolute; left: 59px; top: 4px; width: 1px; height: 6px; background: #aaa; }
.pct { font-family: "Noto Sans", sans-serif; font-size: 15px; margin: 0 14px 0 16px; width: 34px; }
```
